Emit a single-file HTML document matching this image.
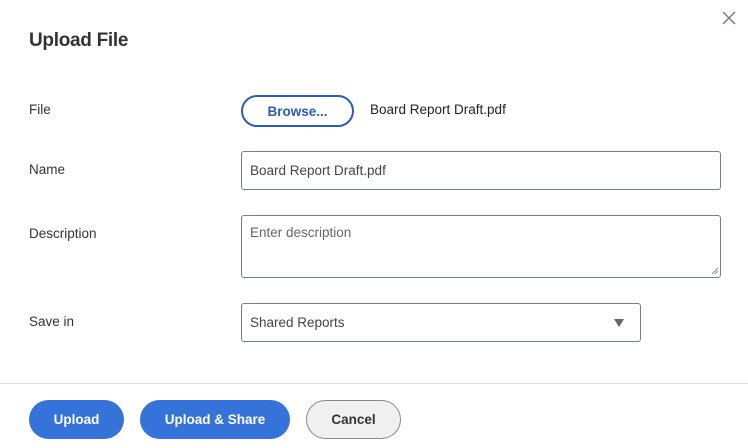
<!DOCTYPE html>
<html><head><style>
*{box-sizing:border-box;margin:0;padding:0}
body{width:748px;height:448px;background:#fff;font-family:"Liberation Sans",sans-serif;color:#333;position:relative;overflow:hidden}
.a{position:absolute}
h1{position:absolute;left:29px;top:30px;font-size:19px;font-weight:bold;color:#333;letter-spacing:-0.3px}
.lbl{position:absolute;left:29px;font-size:13.5px;color:#333}
.inp{position:absolute;border:1px solid #7a7f85;border-radius:3px;background:#fff;font-size:13.5px;color:#444;padding-left:8px}
.btn{position:absolute;top:400px;height:39px;border-radius:20px;font-size:13.5px;font-weight:bold;display:flex;align-items:center;justify-content:center}
</style></head><body>
<svg class="a" style="left:722px;top:11px" width="14" height="14" viewBox="0 0 14 14"><path d="M1 1L13 13M13 1L1 13" stroke="#777" stroke-width="1.4"/></svg>
<h1>Upload File</h1>
<div class="lbl" style="top:102px">File</div>
<div class="a" style="left:241px;top:95px;width:113px;height:32px;border:2px solid #2a5cb8;border-radius:16px;color:#2a5cb8;font-weight:bold;font-size:13.5px;display:flex;align-items:center;justify-content:center">Browse...</div>
<div class="a" style="left:370px;top:102px;font-size:13.5px;color:#222">Board Report Draft.pdf</div>
<div class="lbl" style="top:162px">Name</div>
<div class="inp" style="left:241px;top:151px;width:480px;height:39px;line-height:37px">Board Report Draft.pdf</div>
<div class="lbl" style="top:226px">Description</div>
<div class="inp" style="left:241px;top:215px;width:480px;height:63px;padding-top:9px;color:#666">Enter description</div>
<svg class="a" style="left:710px;top:266px" width="9" height="9"><path d="M8 2L2 8M8 5L5 8" stroke="#888"/></svg>
<div class="lbl" style="top:314px">Save in</div>
<div class="inp" style="left:241px;top:303px;width:400px;height:39px;line-height:37px">Shared Reports</div>
<svg class="a" style="left:614px;top:319px" width="10" height="8"><path d="M0 0H10L5 8Z" fill="#666"/></svg>
<div class="a" style="left:0;top:383px;width:748px;height:1px;background:#ddd"></div>
<div class="btn" style="left:29px;width:95px;background:#3573db;color:#fff">Upload</div>
<div class="btn" style="left:140px;width:150px;background:#3573db;color:#fff">Upload &amp; Share</div>
<div class="btn" style="left:306px;width:95px;background:#f0f0f0;border:1px solid #888;color:#333">Cancel</div>
</body></html>
